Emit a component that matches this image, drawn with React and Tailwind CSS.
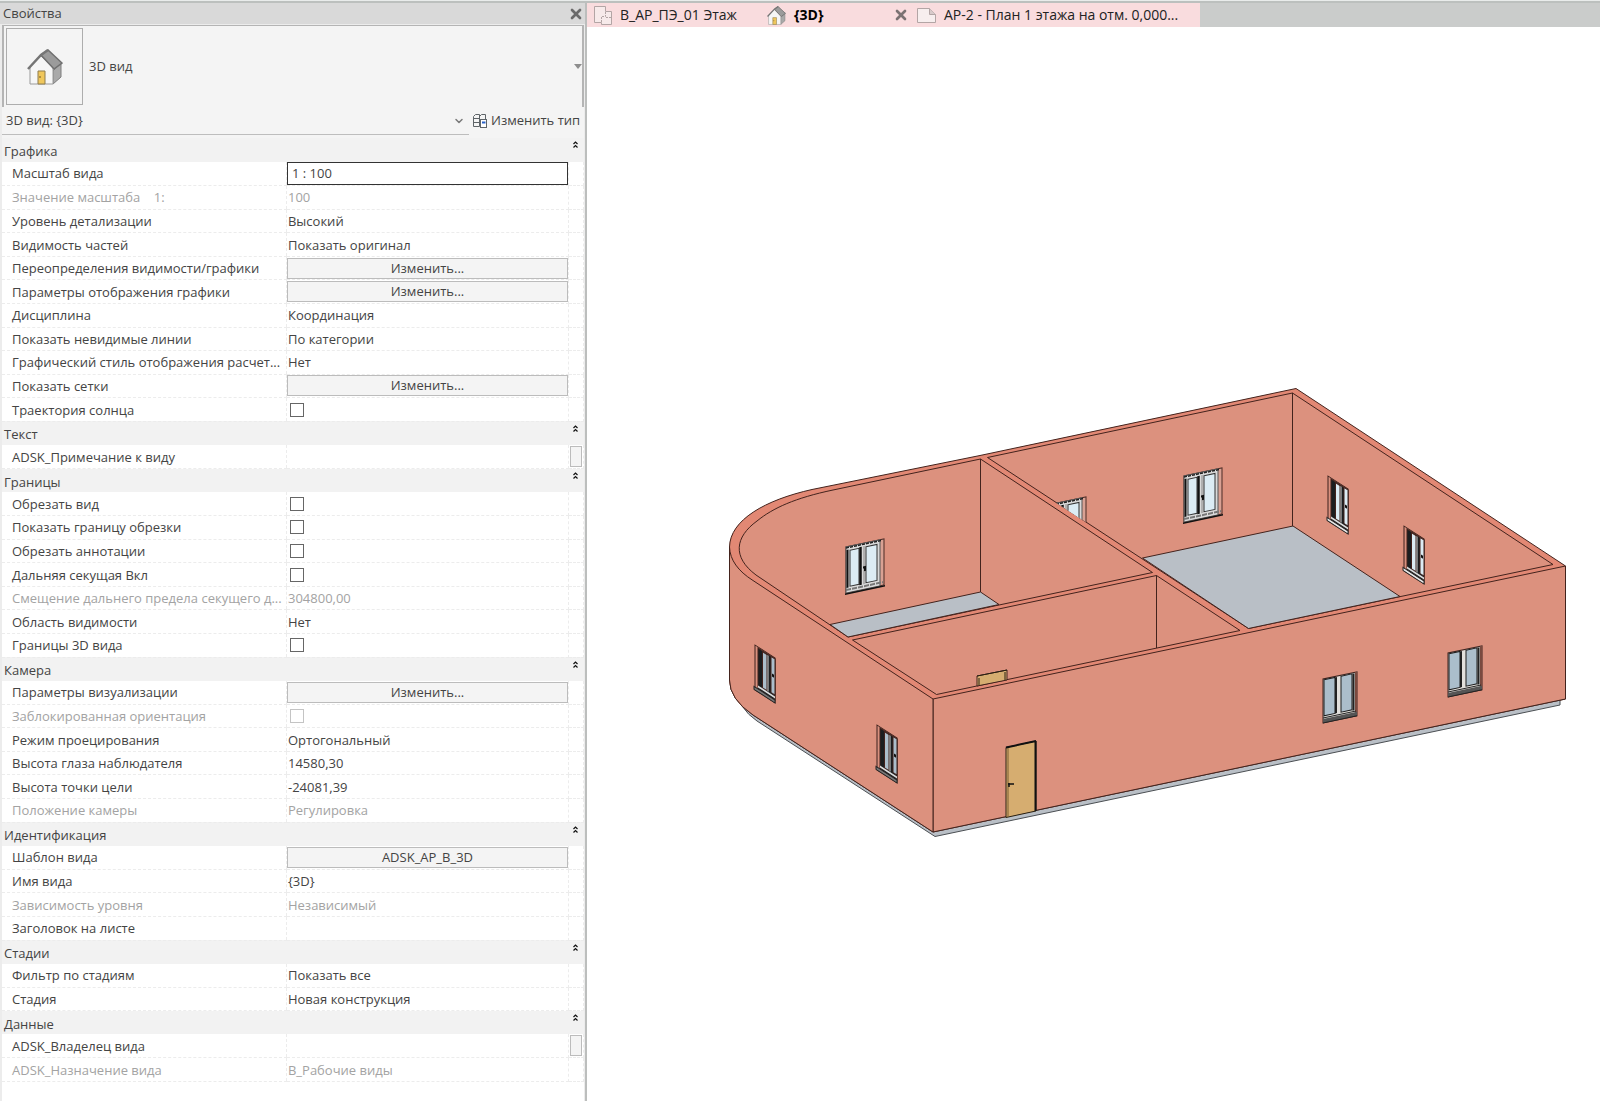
import React, { useState } from 'react';
import { ChevronDown, X } from 'lucide-react';

const SECTIONS = [
  {
    title: 'Графика',
    rows: [
      { label: 'Масштаб вида', value: '1 : 100', type: 'input' },
      { label: 'Значение масштаба    1:', value: '100', disabled: true },
      { label: 'Уровень детализации', value: 'Высокий' },
      { label: 'Видимость частей', value: 'Показать оригинал' },
      { label: 'Переопределения видимости/графики', value: 'Изменить...', type: 'button' },
      { label: 'Параметры отображения графики', value: 'Изменить...', type: 'button' },
      { label: 'Дисциплина', value: 'Координация' },
      { label: 'Показать невидимые линии', value: 'По категории' },
      { label: 'Графический стиль отображения расчет...', value: 'Нет' },
      { label: 'Показать сетки', value: 'Изменить...', type: 'button' },
      { label: 'Траектория солнца', type: 'checkbox' },
    ],
  },
  {
    title: 'Текст',
    rows: [{ label: 'ADSK_Примечание к виду', value: '', extra: true }],
  },
  {
    title: 'Границы',
    rows: [
      { label: 'Обрезать вид', type: 'checkbox' },
      { label: 'Показать границу обрезки', type: 'checkbox' },
      { label: 'Обрезать аннотации', type: 'checkbox' },
      { label: 'Дальняя секущая Вкл', type: 'checkbox' },
      { label: 'Смещение дальнего предела секущего д...', value: '304800,00', disabled: true },
      { label: 'Область видимости', value: 'Нет' },
      { label: 'Границы 3D вида', type: 'checkbox' },
    ],
  },
  {
    title: 'Камера',
    rows: [
      { label: 'Параметры визуализации', value: 'Изменить...', type: 'button' },
      { label: 'Заблокированная ориентация', type: 'checkbox', disabled: true },
      { label: 'Режим проецирования', value: 'Ортогональный' },
      { label: 'Высота глаза наблюдателя', value: '14580,30' },
      { label: 'Высота точки цели', value: '-24081,39' },
      { label: 'Положение камеры', value: 'Регулировка', disabled: true },
    ],
  },
  {
    title: 'Идентификация',
    rows: [
      { label: 'Шаблон вида', value: 'ADSK_АР_В_3D', type: 'button' },
      { label: 'Имя вида', value: '{3D}' },
      { label: 'Зависимость уровня', value: 'Независимый', disabled: true },
      { label: 'Заголовок на листе', value: '' },
    ],
  },
  {
    title: 'Стадии',
    rows: [
      { label: 'Фильтр по стадиям', value: 'Показать все' },
      { label: 'Стадия', value: 'Новая конструкция' },
    ],
  },
  {
    title: 'Данные',
    rows: [
      { label: 'ADSK_Владелец вида', value: '', extra: true },
      { label: 'ADSK_Назначение вида', value: 'В_Рабочие виды', disabled: true },
    ],
  },
];

const HouseIcon = ({ className }) => (
  <svg viewBox="0 0 36 36" className={className} aria-hidden="true">
    <path d="M26 22 L34 13 V28 L26 35 Z" fill="#a9a9a9" stroke="#7d7d7d" />
    <path d="M3 18 L14 7 L26 19 V35 H3 Z" fill="#f6f6f6" stroke="#9a9a9a" />
    <path d="M14 6 L21 1 L35 14 L27 20 Z" fill="#9b9b9b" stroke="#6f6f6f" strokeWidth="1.5" />
    <path d="M1 20 L14 6 L21 1" fill="none" stroke="#757575" strokeWidth="2.5" />
    <path d="M11 35 V22 H18 V35 Z" fill="#f0c75c" stroke="#8f7c4d" />
    <circle cx="13" cy="28" r="0.8" fill="#5c4a1c" />
  </svg>
);

const PlanIcon = () => (
  <svg viewBox="0 0 19 19" className="h-[19px] w-[19px]" fill="#f7eaea" stroke="#b3a5a5" aria-hidden="true">
    <path d="M1.500 0.500 H12.500 V5.500 H18.500 V18.500 H8.500 V16.500 H1.500 Z" />
    <path d="M8.500 16 V10.500 H12.500 V5.500 M13 11.500 H18" strokeDasharray="2 1" />
  </svg>
);

const SheetIcon = () => (
  <svg viewBox="0 0 19 15" className="h-[15px] w-[19px]" fill="#f7eeee" stroke="#b3a5a5" aria-hidden="true">
    <path d="M0.500 0.500 H12.500 L18.500 6.500 V14.500 H0.500 Z" />
    <path d="M12.500 0.500 V6.500 H18.500" fill="#d8caca" />
  </svg>
);

const EditTypeIcon = () => (
  <svg viewBox="0 0 14 14" className="h-[14px] w-[14px]" fill="none" stroke="#5e6468" aria-hidden="true">
    <path d="M0.500 12.500 V2.500 L2.500 0.500 H6.500 V12.500 Z M0.500 4.500 H6 M0.500 8.500 H6" />
    <path d="M6.500 2.500 L8.500 0.500 H12.500 V5" />
    <rect x="7.500" y="5.500" width="6" height="8" fill="#fff" />
    <path d="M9 8.500 H12.500" stroke="#2a62c9" strokeWidth="2" />
  </svg>
);

const CollapseIcon = () => (
  <svg viewBox="0 0 5 7" className="h-[7px] w-[5px]" fill="none" stroke="#111" strokeWidth="1.2" aria-hidden="true">
    <path d="M0.500 3 L2.500 1 L4.500 3 M0.500 6.500 L2.500 4.500 L4.500 6.500" />
  </svg>
);

const PropertyValue = ({ row, id }) => {
  if (row.type === 'input') {
    return (
      <input
        id={id}
        defaultValue={row.value}
        className="block h-[23px] w-full border border-[#333] bg-white px-1 text-[#444] outline-none"
      />
    );
  }
  if (row.type === 'button') {
    return (
      <button
        id={id}
        type="button"
        className="block h-[21px] w-full border border-[#bcbcbc] bg-[#f4f4f4] text-center leading-[19px] text-[#444]"
      >
        {row.value}
      </button>
    );
  }
  if (row.type === 'checkbox') {
    return (
      <input
        id={id}
        type="checkbox"
        disabled={row.disabled}
        className="ml-[3px] block h-[14px] w-[14px] appearance-none border border-[#666] bg-white checked:bg-[#666] disabled:border-[#c4c4c4]"
      />
    );
  }
  return <span className="pl-px">{row.value}</span>;
};

const PropertyTable = () => (
  <table className="h-full w-full table-fixed border-collapse leading-5">
    <colgroup>
      <col />
      <col className="w-[282px]" />
      <col className="w-[15px]" />
    </colgroup>
    {SECTIONS.map((section, s) => (
      <tbody key={section.title}>
        <tr className="h-[23px] bg-[#f2f2f2]">
          <th colSpan={3} className="p-0 text-left font-normal">
            <div className="flex justify-between pl-0.5 pr-1.5">
              <span className="pt-0.5">{section.title}</span>
              <button type="button" aria-label={`Свернуть: ${section.title}`} className="h-3">
                <CollapseIcon />
              </button>
            </div>
          </th>
        </tr>
        {section.rows.map((row, r) => {
          const id = `prop-${s}-${r}`;
          return (
            <tr key={row.label} className={`h-[23px] whitespace-pre ${row.disabled ? 'text-[#a3a3a3]' : 'text-[#444]'}`}>
              <td className="border-b border-dashed border-[#ececec] p-0 pl-2.5">
                {row.type ? <label htmlFor={id}>{row.label}</label> : row.label}
              </td>
              <td className="border border-t-0 border-dashed border-[#ececec] p-0">
                <PropertyValue row={row} id={id} />
              </td>
              <td className="border border-t-0 border-dashed border-[#ececec] p-0">
                {row.extra && (
                  <button
                    type="button"
                    aria-label={`Выбрать: ${row.label}`}
                    className="mx-auto block h-[21px] w-3 border border-[#bcbcbc] bg-[#f4f4f4]"
                  />
                )}
              </td>
            </tr>
          );
        })}
      </tbody>
    ))}
  </table>
);

const PropertiesPanel = () => (
  <aside className="flex h-full w-[587px] shrink-0 flex-col border-r-2 border-[#bcbebd] bg-[#ececec] text-[13px] text-[#444]">
    <header className="flex h-[21px] items-center justify-between bg-[#d9d9d9] pl-[3px] pr-px">
      <h1>Свойства</h1>
      <button type="button" aria-label="Закрыть">
        <X className="h-4 w-4 text-[#6b6b6b]" strokeWidth={4} />
      </button>
    </header>

    <div className="ml-0.5 mr-px mt-px flex min-h-0 flex-1 flex-col bg-white">
      <div className="bg-[#f4f4f4] pb-[3px]">
        <button
          type="button"
          className="flex h-[82px] w-full items-center border-x-2 border-t border-[#b4b4b4] pl-0.5 text-left"
        >
          <span className="flex h-[77px] w-[77px] items-center justify-center border border-[#adadad]">
            <HouseIcon className="h-9 w-9" />
          </span>
          <span className="flex-1 pl-1.5">3D вид</span>
          <span className="h-0 w-0 border-x-4 border-t-5 border-x-transparent border-t-[#8d8d8d]" />
        </button>
        <div className="flex h-7 items-center">
          <div className="flex h-7 w-[467px] items-center border-b border-[#bdbdbd] pr-1">
            <select aria-label="Вид" className="h-6 flex-1 appearance-none bg-transparent pl-1 outline-none">
              <option>{'3D вид: {3D}'}</option>
            </select>
            <ChevronDown className="h-3 w-3 text-[#7a7a7a]" strokeWidth={3} />
          </div>
          <button type="button" className="flex items-center gap-1 whitespace-nowrap pl-1">
            <EditTypeIcon />
            Изменить тип
          </button>
        </div>
      </div>
      <div className="min-h-0 flex-1 pb-[19px]">
        <PropertyTable />
      </div>
    </div>
  </aside>
);

const ViewTabs = () => {
  const [active, setActive] = useState('3d');

  return (
    <nav className="flex h-6 bg-[#cacccb] text-sm text-[#222]">
      <div className="flex w-[613px] items-center whitespace-nowrap bg-[#f9dcde]">
        <button type="button" onClick={() => setActive('plan')} className="flex w-[174px] items-center gap-2 pl-1.5">
          <PlanIcon />
          В_АР_ПЭ_01 Этаж
        </button>
        <button
          type="button"
          onClick={() => setActive('3d')}
          className={`flex flex-1 items-center gap-2 pl-1.5 ${active === '3d' ? 'font-bold text-black' : ''}`}
        >
          <HouseIcon className="h-[19px] w-[19px]" />
          {'{3D}'}
        </button>
        <button type="button" aria-label="Закрыть {3D}">
          <X className="h-4 w-4 text-[#7b7273]" strokeWidth={4} />
        </button>
        <button type="button" onClick={() => setActive('sheet')} className="flex w-[291px] items-center gap-2 pl-2">
          <SheetIcon />
          АР-2 - План 1 этажа на отм. 0,000...
        </button>
      </div>
    </nav>
  );
};

// Window seen from inside, on a wall parallel to the facade
const InnerWindow = ({ x, y }) => (
  <g transform={`translate(${x} ${y}) skewY(-12)`}>
    <path d="M0 0 H38 V46 H0 Z" fill="#d9a193" stroke="#4a2a24" />
    <path d="M0 0 H34 V46 H0 Z" fill="#d9d9d9" stroke="#555" />
    <path d="M0 1 H35" stroke="#222" strokeWidth="1.5" strokeDasharray="3 1" />
    <path d="M1.500 3 V41" stroke="#111" strokeWidth="2" />
    <path d="M4 4 H13 V40 H4 Z M20 4 H31 V40 H20 Z" fill="#dcecf4" stroke="#333" />
    <path d="M14.500 3 V41" stroke="#111" strokeWidth="2.5" />
    <path d="M18 3 V41" stroke="#888" />
    <path d="M17 24 H19 V28" fill="none" stroke="#111" strokeWidth="2" />
    <path d="M0 43 H37" stroke="#777" strokeWidth="2" strokeDasharray="5 1" />
    <path d="M-1 47 H39" stroke="#111" strokeWidth="1.5" />
  </g>
);

// Window of the facade seen from outside
const FacadeWindow = ({ x, y }) => (
  <g transform={`translate(${x} ${y}) skewY(-12)`}>
    <path d="M0 0 H34 V44 H0 Z" fill="#e2e0dc" stroke="#3c211c" />
    <path d="M1 1 H12 V37 H1 Z M18 1 H29 V37 H18 Z" fill="#abbecb" stroke="#1c1c1c" />
    <path d="M13 1 V37 M30.500 1 V38" stroke="#222" strokeWidth="2" />
    <path d="M33 0 V43" stroke="#7a4a3f" strokeWidth="2" />
    <path d="M0 42 H34" stroke="#555" strokeWidth="4" />
    <path d="M0 39 H33 M0 44 H34" stroke="#222" />
  </g>
);

// Window on a wall that runs away from the viewer
const SideWindow = ({ x, y, glass, sill }) => (
  <g transform={`translate(${x} ${y}) skewY(33)`}>
    <path d="M0 0 H20 V45 H0 Z" fill="#d9907e" stroke="#3c211c" />
    <path d="M3 1 H20 V42 H3 Z" fill="#1b1e20" />
    <path d="M7.500 2 H12 V38 H7.500 Z M16 1 H20 V37 H16 Z" fill={glass} />
    <path d="M13 2 V38" stroke="#d5d5d5" />
    <path d="M3 39.500 H20" stroke="#ddd" strokeWidth="2" />
    <path d="M-1 42 H20 V45 H-1 Z" fill={sill} stroke="#222" />
    <path d="M17 19 H19" stroke="#111" strokeWidth="3" />
  </g>
);

const BuildingModel = () => (
  <svg
    viewBox="587 27 1013 1074"
    className="h-full w-full"
    fill="none"
    stroke="#43231d"
    strokeWidth="1"
    role="img"
    aria-label="3D модель здания"
  >
    {/* Foundation */}
    <path d="M742 706 Q748 715 757 721 L935 836.500 L1560 705 V698 L933 828 Z" fill="#b9bfc6" stroke="#4b4f53" />

    {/* Whole body, in the colour of the top of the walls */}
    <path
      d="M1296 388.500 L1565.500 566 V699 L933 832 L753 715 Q729.500 699 729.500 680 V547 C730 520 765 500 812 489.500 L980 455.500 Z"
      fill="#e28874"
    />

    {/* Outer walls */}
    <path d="M933 699 L1565.500 566 V699 L933 832 Z" fill="#dc917e" />
    <path d="M729.500 547 C730 560 738 571 753 580.500 L933 699 V832 L753 715 Q729.500 699 729.500 680 Z" fill="#dc917e" />

    {/* Left room */}
    <path
      d="M980.500 459 L1152.500 572.500 L848 637 L756 575 C732 557 735 537 757 521 C773 508 795 498 833 490 Z"
      fill="#dc917e"
    />
    <path d="M830 624.500 L980.500 592 L999 604.500 L848 637 Z" fill="#b9bfc6" />
    <path d="M980.500 459 V592" />

    {/* Front room */}
    <path d="M852.500 640 L1156.500 575.500 L1240 630.500 L936.500 694.500 Z" fill="#dc917e" />
    <path d="M1156.500 575.500 V648" />

    {/* Right room */}
    <path d="M987.500 457.500 L1292.500 393 L1553 564.500 L1248.500 628.500 Z" fill="#dc917e" />
    <path d="M1142.500 558 L1293 526 L1400 596.500 L1248.500 628.500 Z" fill="#b9bfc6" />
    <path d="M1292.500 393 V526" />

    {/* Doors */}
    <path d="M977 676 L1007 670 V680 L977 686 Z" fill="#d6ad70" />
    <path d="M977 676 L1007 670 M979 678 V685 M1005 672 V680" stroke="#2a2113" />
    <path d="M1006 747.500 L1036 741 V811 L1006 817.500 Z" fill="#d6ad70" stroke="#2a2113" />
    <path d="M1008 748 V817" stroke="#7a5d30" />
    <path d="M1035.500 741 V811 M1006 747.500 L1036 741" stroke="#111" strokeWidth="2" />
    <path d="M1008 784 H1014 M1009 783 V787" stroke="#111" strokeWidth="1.5" />

    <InnerWindow x={846} y={547} />
    <InnerWindow x={1184} y={476} />
    <clipPath id="behind-partition">
      <path d="M1040 490 L1040 492 L1100 531.500 V480 Z" />
    </clipPath>
    <g clipPath="url(#behind-partition)">
      <InnerWindow x={1048} y={505} />
    </g>

    <SideWindow x={1328} y={476} glass="#dcecf4" sill="#e8e8e8" />
    <SideWindow x={1404} y={526} glass="#dcecf4" sill="#e8e8e8" />
    <SideWindow x={755} y={645} glass="#abbecb" sill="#777" />
    <SideWindow x={877} y={725} glass="#abbecb" sill="#777" />

    <FacadeWindow x={1323} y={679} />
    <FacadeWindow x={1448} y={653} />
  </svg>
);

const App = () => (
  <div className="flex h-screen flex-col overflow-hidden border-t border-[#e9eceb] bg-white font-['Open_Sans','Noto_Sans',sans-serif]">
    <div className="h-0.5 shrink-0 bg-[#bcc0be]" />
    <div className="flex min-h-0 flex-1">
      <PropertiesPanel />
      <main className="flex min-w-0 flex-1 flex-col">
        <ViewTabs />
        <div className="min-h-0 flex-1">
          <BuildingModel />
        </div>
      </main>
    </div>
  </div>
);

export default App;
